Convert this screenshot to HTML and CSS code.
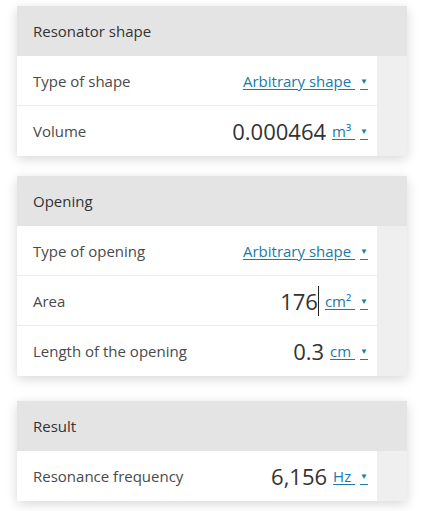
FILE: index.html
```html
<!DOCTYPE html>
<html>
<head>
  <title>Helmholtz resonator</title>
  <link rel="stylesheet" href="styles.css">
</head>
<body>
  <div class="card">
    <div class="card-head">Resonator shape</div>
    <div class="row">
      <span class="label">Type of shape</span>
      <span class="unit">Arbitrary shape <i class="arrow">&#9660;</i></span>
    </div>
    <div class="row">
      <span class="label">Volume</span>
      <span class="value">0.000464</span>
      <span class="unit">m³ <i class="arrow">&#9660;</i></span>
    </div>
  </div>

  <div class="card">
    <div class="card-head">Opening</div>
    <div class="row">
      <span class="label">Type of opening</span>
      <span class="unit">Arbitrary shape <i class="arrow">&#9660;</i></span>
    </div>
    <div class="row">
      <span class="label">Area</span>
      <span class="value"><span class="caret">176</span></span>
      <span class="unit">cm² <i class="arrow">&#9660;</i></span>
    </div>
    <div class="row">
      <span class="label">Length of the opening</span>
      <span class="value">0.3</span>
      <span class="unit">cm <i class="arrow">&#9660;</i></span>
    </div>
  </div>

  <div class="card result">
    <div class="card-head">Result</div>
    <div class="row">
      <span class="label">Resonance frequency</span>
      <span class="value">6,156</span>
      <span class="unit">Hz <i class="arrow">&#9660;</i></span>
    </div>
  </div>
</body>
</html>
```

FILE: styles.css
```css
body {
  margin: 0;
  padding: 6px 14px 0 17px;
  background: #fff;
  font-family: "Open Sans", "Noto Sans", sans-serif;
  color: #444;
}

/* Карточка */
.card {
  width: 390px;
  margin-bottom: 20px;
  background: #efefef;
  box-shadow: 0 3px 12px rgba(0,0,0,0.16);
  border-radius: 2px;
}

.card.result {
  margin-top: 25px;
}

.card-head {
  height: 50px;
  line-height: 50px;
  padding-left: 16px;
  background: #e4e4e4;
  font-size: 15px;
  color: #333;
}

/* Строки */
.row {
  display: flex;
  align-items: center;
  width: 360px;
  height: 50px;
  box-sizing: border-box;
  padding: 0 9px 0 16px;
  background: #fff;
  border-bottom: 1px solid #ececec;
}

.row:last-child {
  border-bottom: none;
}

.label {
  flex: 1;
  font-size: 15px;
  color: #4a4a4a;
}

.value {
  font-size: 22px;
  color: #333;
  margin-right: 6px;
}

.caret {
  border-right: 1px solid #222;
}

.unit {
  font-size: 15px;
  color: #1a7ba8;
  text-decoration: underline;
  text-underline-offset: 2px;
}

.arrow {
  font-style: normal;
  font-size: 8px;
  vertical-align: 3px;
  margin-left: 5px;
}
```
